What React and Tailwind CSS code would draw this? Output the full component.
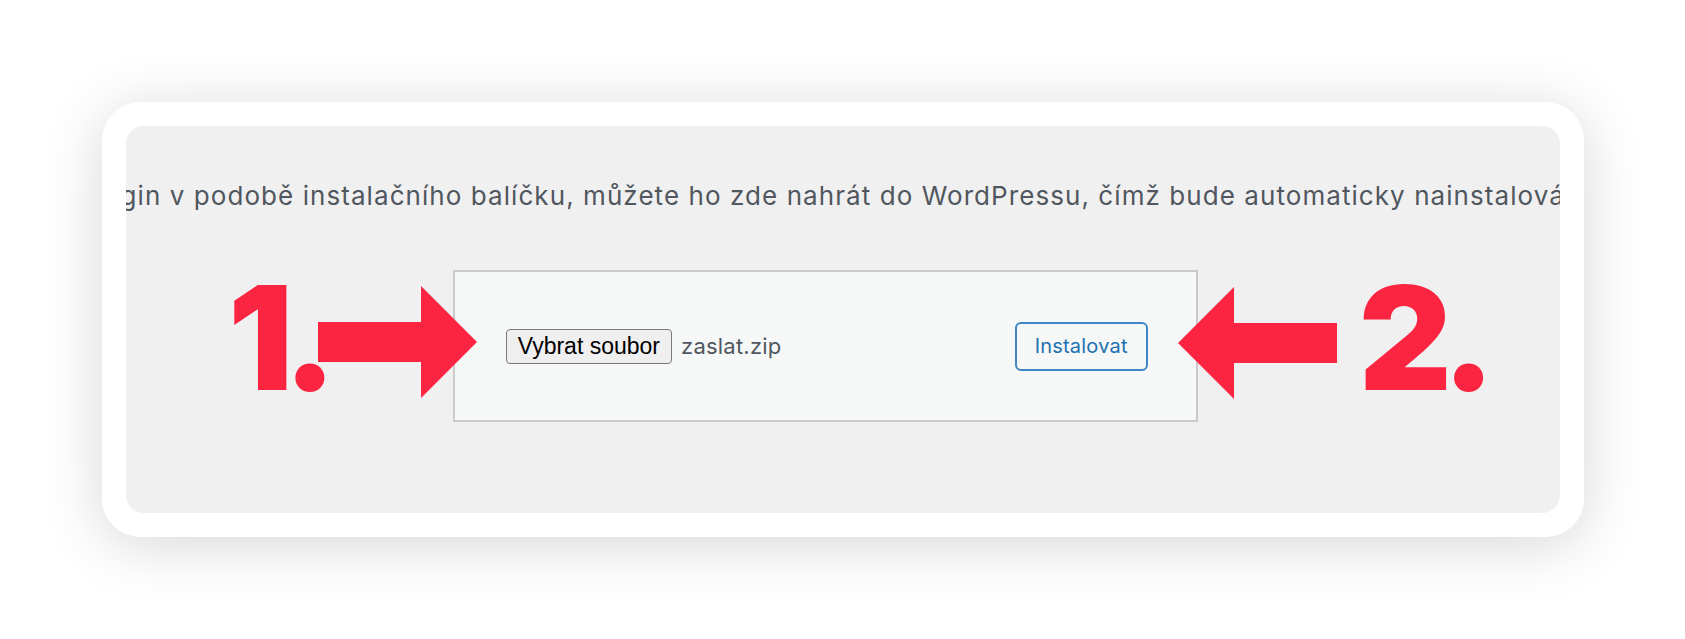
import React from 'react'

const RED = '#fb2541'

function Arrow ({ dir = 'right', className = '' }) {
  // block arrow: shaft + triangular head, drawn pointing right, mirrored for left
  const points = '0,36 103,36 103,0 159,56 103,112 103,76 0,76'
  return (
    <svg
      width="159"
      height="112"
      viewBox="0 0 159 112"
      className={`relative z-10 shrink-0 ${dir === 'left' ? '-scale-x-100' : ''} ${className}`}
    >
      <polygon points={points} fill={RED} />
    </svg>
  )
}

function StepNumber ({ children, className = '' }) {
  return (
    <span
      className={`shrink-0 self-start font-['Inter',sans-serif] text-[144px] font-black leading-none tracking-[-0.07em] text-[#fb2541] ${className}`}
    >
      {children}
    </span>
  )
}

function UploadBox () {
  return (
    <div className="flex h-[152px] w-[745px] shrink-0 items-center justify-between border-2 border-[#c9cacc] bg-[#f6f7f7] pl-[51px] pr-[48px]">
      <div className="flex items-center gap-[9px]">
        <button
          type="button"
          className="h-[35px] rounded-[4px] border border-[#7a7a7a] bg-[#efefef] px-[11px] font-['Liberation_Sans',Arial,sans-serif] text-[23px] leading-none text-black"
        >
          Vybrat soubor
        </button>
        <span className="font-['Inter',sans-serif] text-[22px] tracking-[0.01em] text-[#50575e]">
          zaslat.zip
        </span>
      </div>
      <button
        type="button"
        className="h-[49px] w-[133px] rounded-[6px] border-2 border-[#3f86c2] bg-[#f6f7f7] font-['Inter',sans-serif] text-[20px] tracking-[0.01em] text-[#2271b1]"
      >
        Instalovat
      </button>
    </div>
  )
}

export default function App () {
  return (
    <div className="h-[639px] w-full overflow-hidden bg-white pl-[102px] pt-[102px]">
      <div className="h-[435px] w-[1482px] rounded-[38px] bg-white p-6 shadow-[0_8px_60px_rgba(0,0,0,0.16)]">
        <div className="flex h-full flex-col overflow-hidden rounded-[18px] bg-[#f0f0f1]">
          <p className="mt-[52px] whitespace-nowrap font-['Inter',sans-serif] text-[26px] leading-[36px] tracking-[0.041em] text-[#50575e]">
            <span className="-ml-[211px]">
              Pokud máte plugin v podobě instalačního balíčku, můžete ho zde nahrát do WordPressu, čímž bude automaticky nainstalován.
            </span>
          </p>

          <div className="mt-[56px] flex items-center pl-[102px]">
            <StepNumber className="-mt-[4px] -mr-[9px]">1.</StepNumber>
            <Arrow className="-mr-[24px] self-start mt-[16px]" />
            <UploadBox />
            <Arrow dir="left" className="-ml-[20px] self-start mt-[17px]" />
            <StepNumber className="-mt-[4px] ml-[22px]">2.</StepNumber>
          </div>
        </div>
      </div>
    </div>
  )
}
